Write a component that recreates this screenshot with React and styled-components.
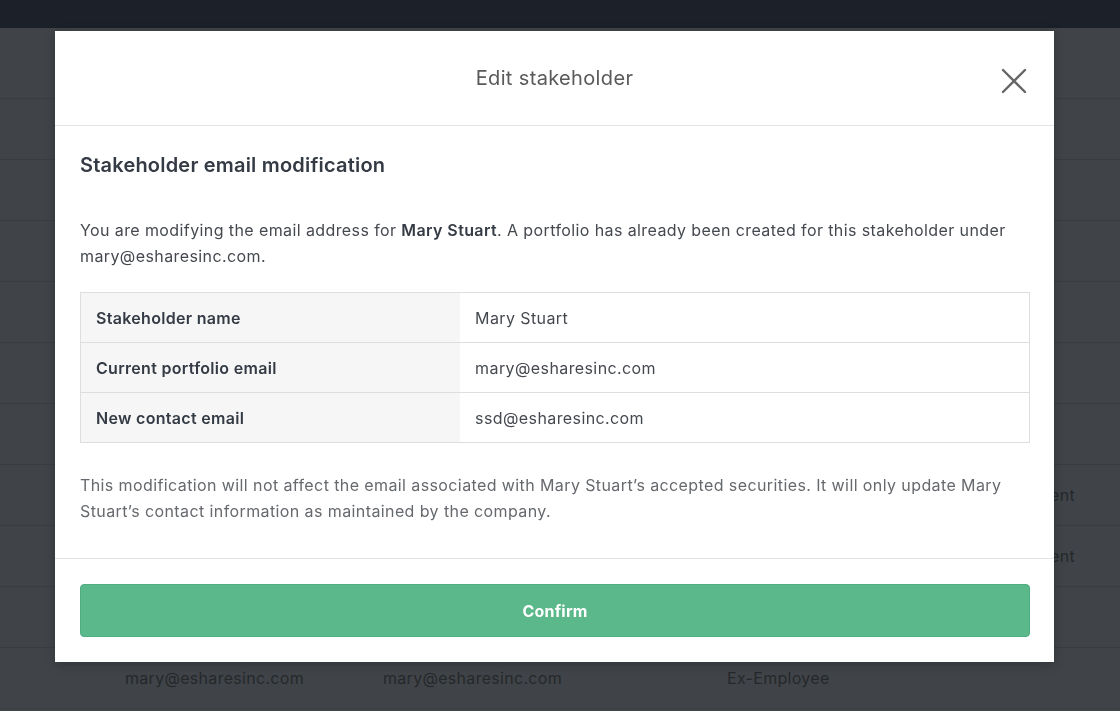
import styled, { createGlobalStyle } from "styled-components";

const GlobalStyle = createGlobalStyle`
  html, body {
    margin: 0;
    padding: 0;
    height: 100%;
    overflow: hidden;
  }
  body {
    font-family: Inter, "Noto Sans", "Liberation Sans", sans-serif;
    background: #404448;
  }
`;

const bgRows = [
  { email: "", portfolio: "", status: "", extra: "" },
  { email: "", portfolio: "", status: "", extra: "" },
  { email: "", portfolio: "", status: "", extra: "" },
  { email: "", portfolio: "", status: "", extra: "" },
  { email: "", portfolio: "", status: "", extra: "" },
  { email: "", portfolio: "", status: "", extra: "" },
  { email: "", portfolio: "", status: "", extra: "" },
  { email: "", portfolio: "", status: "", extra: "Current" },
  { email: "", portfolio: "", status: "", extra: "Current" },
  { email: "", portfolio: "", status: "", extra: "" },
  { email: "mary@esharesinc.com", portfolio: "mary@esharesinc.com", status: "Ex-Employee", extra: "" },
];

const details = [
  { label: "Stakeholder name", value: "Mary Stuart" },
  { label: "Current portfolio email", value: "mary@esharesinc.com" },
  { label: "New contact email", value: "ssd@esharesinc.com" },
];

export default function App() {
  return (
    <>
      <GlobalStyle />
      <Page>
        <TopBar />
        <BgTable>
          {bgRows.map((r, i) => (
            <BgRow key={i}>
              <BgCell>{r.email}</BgCell>
              <BgCell>{r.portfolio}</BgCell>
              <BgCell>{r.status}</BgCell>
              <BgCell $right>{r.extra}</BgCell>
            </BgRow>
          ))}
        </BgTable>
      </Page>

      <Backdrop>
        <Modal>
          <ModalHeader>
            <ModalTitle>Edit stakeholder</ModalTitle>
            <CloseButton aria-label="Close">
              <svg width="26" height="26" viewBox="0 0 26 26" fill="none">
                <path d="M2 2L24 24M24 2L2 24" stroke="#666" strokeWidth="2.4" strokeLinecap="round" />
              </svg>
            </CloseButton>
          </ModalHeader>

          <ModalBody>
            <SectionTitle>Stakeholder email modification</SectionTitle>
            <Paragraph>
              You are modifying the email address for <strong>Mary Stuart</strong>. A portfolio has
              already been created for this stakeholder under mary@esharesinc.com.
            </Paragraph>

            <DetailTable>
              <tbody>
                {details.map((d) => (
                  <tr key={d.label}>
                    <LabelCell>{d.label}</LabelCell>
                    <ValueCell>{d.value}</ValueCell>
                  </tr>
                ))}
              </tbody>
            </DetailTable>

            <Note>
              This modification will not affect the email associated with Mary Stuart’s accepted
              securities. It will only update Mary Stuart’s contact information as maintained by the
              company.
            </Note>
          </ModalBody>

          <ModalFooter>
            <ConfirmButton>Confirm</ConfirmButton>
          </ModalFooter>
        </Modal>
      </Backdrop>
    </>
  );
}

/* ================= STYLES ================= */
const Page = styled.div`
  width: 1120px;
  height: 711px;
  background: #404448;
  overflow: hidden;
`;

const TopBar = styled.div`
  height: 28px;
  background: #1b2029;
`;

const BgTable = styled.div`
  display: flex;
  flex-direction: column;
  padding-top: 10px;
`;

const BgRow = styled.div`
  display: grid;
  grid-template-columns: 258px 344px 230px 118px;
  height: 60px;
  align-items: center;
  padding-left: 125px;
  border-bottom: 1px solid #393c40;
`;

const BgCell = styled.div`
  font-size: 16px;
  letter-spacing: 0.3px;
  color: #25282b;
  white-space: nowrap;
  text-align: ${(p) => (p.$right ? "right" : "left")};
`;

const Backdrop = styled.div`
  position: fixed;
  inset: 0;
  padding: 31px 0 0 55px;
`;

const Modal = styled.div`
  width: 999px;
  background: #fff;
  display: flex;
  flex-direction: column;
  box-shadow: 0 2px 10px rgba(0, 0, 0, 0.25);
`;

const ModalHeader = styled.div`
  position: relative;
  height: 94px;
  display: flex;
  align-items: center;
  justify-content: center;
  border-bottom: 1px solid #e3e3e3;
`;

const ModalTitle = styled.h2`
  margin: 0;
  font-size: 20px;
  font-weight: 400;
  letter-spacing: 0.35px;
  color: #5a5a5a;
`;

const CloseButton = styled.button`
  position: absolute;
  right: 27px;
  top: 37px;
  width: 26px;
  height: 26px;
  padding: 0;
  border: none;
  background: none;
  cursor: pointer;
  display: flex;
`;

const ModalBody = styled.div`
  padding: 25px 24px 34px 25px;
  border-bottom: 1px solid #e3e3e3;
`;

const SectionTitle = styled.h3`
  margin: 0 0 38px;
  font-size: 20px;
  line-height: 28px;
  font-weight: 600;
  letter-spacing: 0.2px;
  color: #343b45;
`;

const Paragraph = styled.p`
  margin: 0 0 23px;
  font-size: 16px;
  line-height: 26px;
  letter-spacing: 0.4px;
  color: #45494f;

  strong {
    font-weight: 600;
    color: #343b45;
  }
`;

const DetailTable = styled.table`
  width: 100%;
  border-collapse: collapse;
  border: 1px solid #dedede;
  margin-bottom: 29px;

  tr + tr td {
    border-top: 1px solid #dedede;
  }
`;

const LabelCell = styled.td`
  width: 40%;
  height: 49px;
  padding: 0 15px;
  background: #f6f6f6;
  font-size: 16px;
  font-weight: 600;
  letter-spacing: 0.3px;
  color: #343b45;
`;

const ValueCell = styled.td`
  height: 49px;
  padding: 0 15px;
  font-size: 16px;
  letter-spacing: 0.4px;
  color: #45494f;
`;

const Note = styled.p`
  margin: 0;
  font-size: 16px;
  line-height: 26px;
  letter-spacing: 0.4px;
  color: #66696d;
`;

const ModalFooter = styled.div`
  padding: 25px 24px 25px 25px;
`;

const ConfirmButton = styled.button`
  width: 100%;
  height: 53px;
  border: 1px solid #50ad80;
  border-radius: 4px;
  background: #5ab88a;
  color: #fff;
  font-family: inherit;
  font-size: 16px;
  font-weight: 700;
  letter-spacing: 0.2px;
  cursor: pointer;
`;
